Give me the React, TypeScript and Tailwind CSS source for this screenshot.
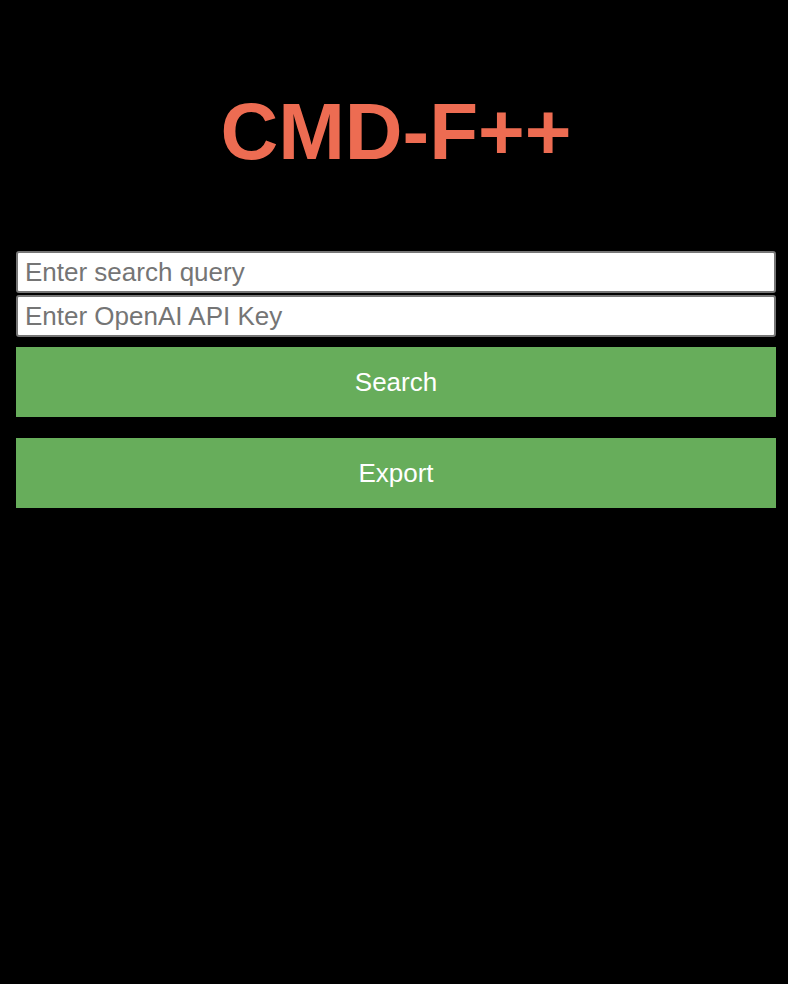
import { useState } from 'react'

export default function App() {
  const [query, setQuery] = useState('')
  const [apiKey, setApiKey] = useState('')

  return (
    <div className="min-h-[984px] bg-black pl-4 pr-3 font-['Liberation_Sans',Arial,sans-serif]">
      <h1 className="pt-[92px] pb-[79px] text-center text-[80px] font-bold leading-none text-[#ed6c52]">
        CMD-F++
      </h1>

      <div className="flex flex-col gap-[2px]">
        <input
          value={query}
          onChange={(e) => setQuery(e.target.value)}
          placeholder="Enter search query"
          className="h-[42px] w-full rounded-[3px] border-2 border-[#767676] bg-white px-[7px] text-[26px] text-black outline-none placeholder:text-[#757575]"
        />
        <input
          value={apiKey}
          onChange={(e) => setApiKey(e.target.value)}
          placeholder="Enter OpenAI API Key"
          className="h-[42px] w-full rounded-[3px] border-2 border-[#767676] bg-white px-[7px] text-[26px] text-black outline-none placeholder:text-[#757575]"
        />
      </div>

      <div className="mt-[10px] flex flex-col gap-[21px]">
        <button className="h-[70px] w-full bg-[#67ad5b] text-[26px] text-white">Search</button>
        <button className="h-[70px] w-full bg-[#67ad5b] text-[26px] text-white">Export</button>
      </div>
    </div>
  )
}
